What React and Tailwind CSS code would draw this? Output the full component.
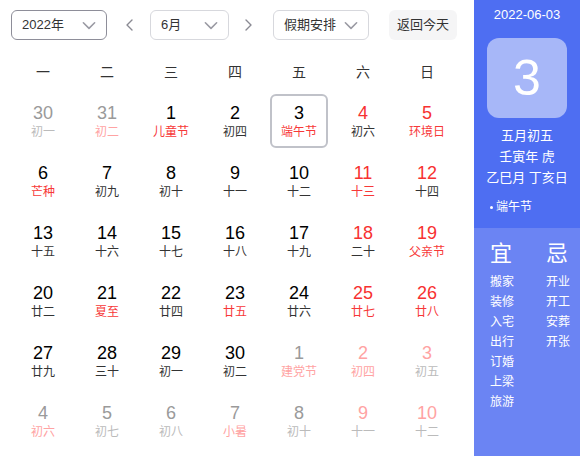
import React from "react";

const RED = "text-[#f73131]";

// kind: n normal, w weekend red, o out-of-month gray, ow out-of-month weekend
// lunar: d dark, r red, g gray, p pink
const rows = [
  [["30", "初一", "o", "g"], ["31", "初二", "o", "p"], ["1", "儿童节", "n", "r"], ["2", "初四", "n", "d"], ["3", "端午节", "n", "r", true], ["4", "初六", "w", "d"], ["5", "环境日", "w", "r"]],
  [["6", "芒种", "n", "r"], ["7", "初九", "n", "d"], ["8", "初十", "n", "d"], ["9", "十一", "n", "d"], ["10", "十二", "n", "d"], ["11", "十三", "w", "r"], ["12", "十四", "w", "d"]],
  [["13", "十五", "n", "d"], ["14", "十六", "n", "d"], ["15", "十七", "n", "d"], ["16", "十八", "n", "d"], ["17", "十九", "n", "d"], ["18", "二十", "w", "d"], ["19", "父亲节", "w", "r"]],
  [["20", "廿二", "n", "d"], ["21", "夏至", "n", "r"], ["22", "廿四", "n", "d"], ["23", "廿五", "n", "r"], ["24", "廿六", "n", "d"], ["25", "廿七", "w", "r"], ["26", "廿八", "w", "r"]],
  [["27", "廿九", "n", "d"], ["28", "三十", "n", "d"], ["29", "初一", "n", "d"], ["30", "初二", "n", "d"], ["1", "建党节", "o", "p"], ["2", "初四", "ow", "p"], ["3", "初五", "ow", "g"]],
  [["4", "初六", "o", "p"], ["5", "初七", "o", "g"], ["6", "初八", "o", "g"], ["7", "小暑", "o", "p"], ["8", "初十", "o", "g"], ["9", "十一", "ow", "g"], ["10", "十二", "ow", "g"]],
];

const numColor = { n: "text-black", w: RED, o: "text-[#9a9a9a]", ow: "text-[#ffa3a3]" };
const lunarColor = { d: "text-[#333333]", r: "text-[#f73838]", g: "text-[#bbbbbb]", p: "text-[#ffa3a3]" };

const Chevron = ({ dir = "down", className = "" }) => {
  const d = {
    down: "M3 6l5 5 5-5",
    left: "M10 3L5 8l5 5",
    right: "M6 3l5 5-5 5",
  }[dir];
  return (
    <svg viewBox="0 0 16 16" className={className} fill="none" stroke="currentColor" strokeWidth="1.4" strokeLinecap="round" strokeLinejoin="round">
      <path d={d} />
    </svg>
  );
};

const Select = ({ label, width, dark }) => (
  <div
    className={`flex items-center justify-between h-[30px] rounded-[6px] border bg-white pl-[10px] pr-[8px] text-[13px] text-[#333] ${width} ${
      dark ? "border-[#8e8e99]" : "border-[#d7d8dd]"
    }`}
  >
    <span>{label}</span>
    <Chevron className="w-[18px] h-[18px] text-[#9a9aa3]" />
  </div>
);

const App = () => {
  return (
    <div
      className="flex w-[580px] h-[456px] bg-white overflow-hidden"
      style={{ fontFamily: '"Liberation Sans", Arial, "Noto Sans CJK SC", sans-serif' }}
    >
      <div className="w-[474px] pl-[11px]">
        <div className="flex items-center pt-[10px]">
          <Select label="2022年" width="w-[96px]" dark />
          <button className="w-[24px] h-[30px] ml-[11px] flex items-center justify-center text-[#8a8a93]">
            <Chevron dir="left" className="w-[16px] h-[16px]" />
          </button>
          <div className="ml-[8px]">
            <Select label="6月" width="w-[79px]" />
          </div>
          <button className="w-[24px] h-[30px] ml-[7px] flex items-center justify-center text-[#8a8a93]">
            <Chevron dir="right" className="w-[16px] h-[16px]" />
          </button>
          <div className="ml-[13px]">
            <Select label="假期安排" width="w-[96px]" />
          </div>
          <button className="ml-[20px] w-[68px] h-[30px] rounded-[6px] bg-[#f5f5f6] text-[13px] text-[#333]">
            返回今天
          </button>
        </div>

        <div className="grid grid-cols-7 w-[448px] mt-[14px] h-[37px] items-center text-[14px] text-[#333]">
          {["一", "二", "三", "四", "五", "六", "日"].map((d) => (
            <div key={d} className="text-center">{d}</div>
          ))}
        </div>

        <div className="grid grid-cols-7 w-[448px]">
          {rows.flat().map(([num, lunar, k, l, sel], i) => (
            <div key={i} className="h-[60px] p-[3px]">
              <div
                className={`h-full flex flex-col items-center justify-center rounded-[6px] border-2 ${
                  sel ? "border-[#c0c2c9]" : "border-transparent"
                }`}
              >
                <span className={`text-[18px] leading-[20px] ${numColor[k]}`}>{num}</span>
                <span className={`text-[12px] leading-[16px] mt-[1px] ${lunarColor[l]}`}>{lunar}</span>
              </div>
            </div>
          ))}
        </div>
      </div>

      <div className="w-[106px] flex flex-col text-white">
        <div className="h-[228px] bg-[#4e6ef2] flex flex-col items-center">
          <div className="mt-[6px] text-[13px] leading-[18px]">2022-06-03</div>
          <div className="mt-[14px] w-[80px] h-[80px] rounded-[12px] bg-[#a7b7f8] flex items-center justify-center text-[50px] leading-none">
            3
          </div>
          <div className="mt-[7px] flex flex-col items-center text-[13px] leading-[21px]">
            <span>五月初五</span>
            <span>壬寅年 虎</span>
            <span>乙巳月 丁亥日</span>
          </div>
          <div className="self-start ml-[16px] mt-[11px] text-[12px] leading-[16px] flex items-center">
            <span className="w-[3px] h-[3px] rounded-full bg-white mr-[3px]" />
            端午节
          </div>
        </div>
        <div className="flex-1 bg-[#6b84f3] flex pl-[16px] pt-[12px]">
          <div className="w-[56px] flex flex-col">
            <span className="text-[22px] leading-[28px]">宜</span>
            <div className="mt-[4px] flex flex-col text-[12px] leading-[20px]">
              {["搬家", "装修", "入宅", "出行", "订婚", "上梁", "旅游"].map((t) => (
                <span key={t}>{t}</span>
              ))}
            </div>
          </div>
          <div className="flex flex-col">
            <span className="text-[22px] leading-[28px]">忌</span>
            <div className="mt-[4px] flex flex-col text-[12px] leading-[20px]">
              {["开业", "开工", "安葬", "开张"].map((t) => (
                <span key={t}>{t}</span>
              ))}
            </div>
          </div>
        </div>
      </div>
    </div>
  );
};

export default App;
